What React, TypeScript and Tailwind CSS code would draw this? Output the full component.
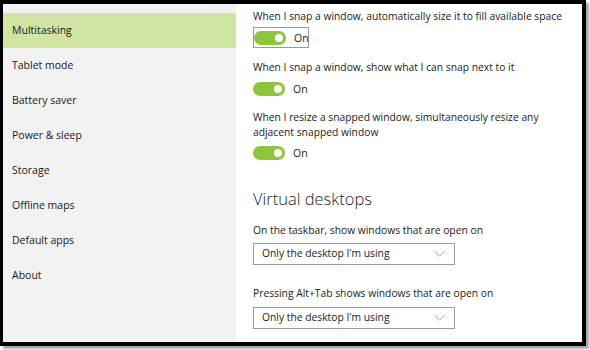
import React from "react";

const items = [
  "Multitasking",
  "Tablet mode",
  "Battery saver",
  "Power & sleep",
  "Storage",
  "Offline maps",
  "Default apps",
  "About",
];

function Toggle() {
  return (
    <div className="flex items-center">
      <div className="w-[32px] h-[14px] rounded-full bg-[#8cc63e] flex items-center justify-end pr-[3px]">
        <div className="w-[8px] h-[8px] rounded-full bg-white" />
      </div>
      <span className="ml-[8px] text-[10.5px] leading-[14px] text-[#1a1a1a]">On</span>
    </div>
  );
}

function Dropdown() {
  return (
    <div className="w-[202px] h-[22px] border border-[#9a9a9a] flex items-center justify-between pl-[8px] pr-[9px] text-[10.3px] text-[#1a1a1a]">
      <span>Only the desktop I'm using</span>
      <svg width="11" height="6" viewBox="0 0 11 6">
        <path d="M0.5 0.5 L5.5 5 L10.5 0.5" fill="none" stroke="#a0a0a0" strokeWidth="1" />
      </svg>
    </div>
  );
}

export default function App() {
  return (
    <div className="w-[590px] h-[350px] bg-white" style={{ fontFamily: '"Open Sans", "Noto Sans", sans-serif' }}>
      <div className="w-[586px] h-[346px] border-t-4 border-l-[3px] border-r-4 border-b-4 border-black flex shadow-[3px_3px_2px_rgba(0,0,0,0.35)]">
        <div className="w-[233px] bg-[#f2f2f2] pt-[9px] flex flex-col">
          {items.map((it, i) => (
            <div
              key={it}
              className={
                "h-[35px] flex items-center pl-[9px] pt-[1px] text-[10.5px] text-[#1a1a1a] " +
                (i === 0 ? "bg-[#d0e4a4]" : "")
              }
            >
              {it}
            </div>
          ))}
        </div>
        <div className="flex-1 bg-white pl-[17px] pt-[4px] flex flex-col text-[10.3px] text-[#1a1a1a]">
          <div className="leading-[16px] whitespace-nowrap">When I snap a window, automatically size it to fill available space</div>
          <div className="mt-[3px] w-[56px] h-[21px] border border-[#9a9a9a] flex items-center">
            <Toggle />
          </div>
          <div className="mt-[11px] leading-[16px] whitespace-nowrap">When I snap a window, show what I can snap next to it</div>
          <div className="mt-[7px] h-[14px]">
            <Toggle />
          </div>
          <div className="mt-[14px] leading-[15px] whitespace-nowrap">
            When I resize a snapped window, simultaneously resize any
            <br />
            adjacent snapped window
          </div>
          <div className="mt-[6px] h-[14px]">
            <Toggle />
          </div>
          <div className="mt-[28px] text-[16.5px] leading-[22px] font-light text-[#222]">Virtual desktops</div>
          <div className="mt-[12px] leading-[16px] whitespace-nowrap">On the taskbar, show windows that are open on</div>
          <div className="mt-[5px]">
            <Dropdown />
          </div>
          <div className="mt-[20px] leading-[16px] whitespace-nowrap">Pressing Alt+Tab shows windows that are open on</div>
          <div className="mt-[6px]">
            <Dropdown />
          </div>
        </div>
      </div>
    </div>
  );
}
